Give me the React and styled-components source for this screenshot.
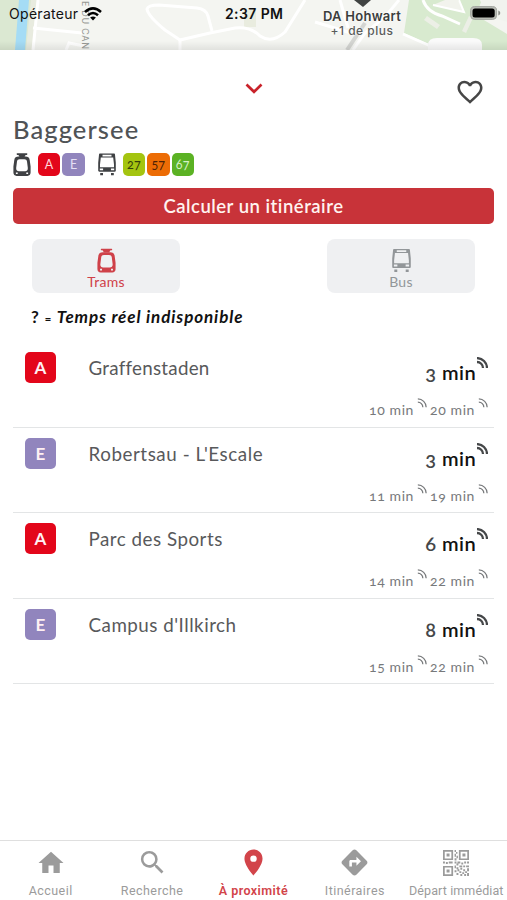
import { useState } from "react";
import styled, { createGlobalStyle } from "styled-components";
import { MdDirections, MdFavoriteBorder, MdHome, MdLocationOn, MdSearch } from "react-icons/md";

const GlobalStyle = createGlobalStyle`
  * {
    box-sizing: border-box;
  }
  body {
    margin: 0;
    background-color: white;
    font-family: Lato, "Open Sans", sans-serif;
    font-variant-numeric: oldstyle-nums;
  }
  button {
    border: none;
    padding: 0;
    background: none;
    font-family: inherit;
    cursor: pointer;
  }
  svg {
    display: block;
    flex-shrink: 0;
  }
`;

const RED = "#e3061a";
const PURPLE = "#9185bd";

const tramLines = [
  { name: "A", bg: RED, color: "#ffd9dc" },
  { name: "E", bg: PURPLE, color: "#e6e0f5" },
];

const busLines = [
  { name: "27", bg: "#a4c410", color: "#35400a" },
  { name: "57", bg: "#ec6c05", color: "#4c2206" },
  { name: "67", bg: "#5bb224", color: "#d5f0c5" },
];

const departures = [
  { line: "A", bg: RED, to: "Graffenstaden", spacing: 0.25, next: 3, later: [10, 20] },
  { line: "E", bg: PURPLE, to: "Robertsau - L'Escale", spacing: 0.56, next: 3, later: [11, 19] },
  { line: "A", bg: RED, to: "Parc des Sports", spacing: 0.5, next: 6, later: [14, 22] },
  { line: "E", bg: PURPLE, to: "Campus d'Illkirch", spacing: 0.5, next: 8, later: [15, 22] },
];

const TramIcon = ({ width = 18, height = 23 }) => (
  <svg width={width} height={height} viewBox="0 0 18 23" fill="currentColor">
    <path d="M4.200.3h9.600q.6 0 .6.800t-.6.800H4.200q-.6 0-.6-.800t.6-.800z" />
    <path d="M5.200 1.500h7.600L11.500 4h-5z" />
    <path
      fillRule="evenodd"
      d="M5.500 3.600h7c2.400 0 3.800 1.100 4.200 3.300l.9 6.700v6c0 2-1.200 3.300-3.200 3.300H3.600c-2 0-3.200-1.300-3.200-3.300v-6l.9-6.700c.4-2.200 1.800-3.300 4.200-3.300zM6.600 6.300c-1.600 0-2.300.7-2.600 2.200l-.8 6.200c-.3 2.200.8 3.500 2.700 3.500h6.200c1.900 0 3-1.300 2.700-3.500L14 8.500c-.3-1.500-1-2.200-2.600-2.200zM2.900 19.400v1.600h1.800v-1.600zm10.400 0v1.600h1.800v-1.600z"
    />
  </svg>
);

const BusIcon = ({ width = 18, height = 23 }) => (
  <svg width={width} height={height} viewBox="0 0 18 23" fill="currentColor">
    <path
      fillRule="evenodd"
      d="M2.200.5h13.600c.8 0 1.200.4 1.200 1.200l.8 8v7.800c0 .8-.4 1.200-1.200 1.200H1.400c-.8 0-1.200-.4-1.200-1.200V9.700l.8-8C1 .9 1.400.5 2.200.5zM4.500 1.700v1.700h9V1.700zM2.800 4.400L2 11.400v2.800h14v-2.800l-.8-7zM1.800 15.400v1.900h3.300v-1.900zm11.100 0v1.900h3.300v-1.900z"
    />
    <path d="M2.200 20h2.800v2.300H2.200zM13 20h2.800v2.300H13z" />
  </svg>
);

const WaveIcon = ({ size, stroke }) => (
  <svg width={size} height={size} viewBox="0 0 12 12" fill="none" stroke="currentColor" strokeWidth={stroke}>
    <path d="M1 1.100A10 10 0 0 1 11 11" />
    <path d="M1 5A6 6 0 0 1 7 11" />
  </svg>
);

const QrIcon = () => (
  <svg width="26" height="26" viewBox="0 0 27 27" fill="currentColor">
    <path
      fillRule="evenodd"
      d="M0 0h10.500v10.500H0zM1.800 1.800v6.900h6.900V1.800zM16.500 0H27v10.500H16.500zM18.300 1.800v6.900h6.900V1.800zM0 16.500h10.500V27H0zM1.800 18.300v6.900h6.900v-6.900z"
    />
    <path d="M3.700 3.700h3.100v3.100H3.700zM20.200 3.700h3.100v3.100h-3.100zM3.700 20.200h3.100v3.100H3.700z" />
    <path d="M12 0h1.500v2H12zM13.500 2H15v2h-1.500zM12 4h1.500v3H12zM14 6h1.500v2.500H14zM12 8.500h2V11h-2zM0 12h2v2H0zM3 12.500h2v2H3zM6 12h4v2H6zM12 12h2v2h-2zM15 12h3v2h-3zM14 14h2v2h-2zM19 13h2v2h-2zM22 12h2v2h-2zM25 12h2v2h-2zM12 16h1.500v3H12zM14 18h2v2h-2zM17 16h3v2h-3zM21 16h2v2h-2zM24 16h3v2h-3zM12 21h2v2h-2zM15 20h2v2h-2zM18 18.500h2v2h-2zM21 20h2v2h-2zM25 19h2v3h-2zM17 22h2v2h-2zM20 23h2v2h-2zM23 22h2v2h-2zM14 24h2v2h-2zM18 25h2v2h-2zM22 25h2v2h-2zM25 24h2v3h-2z" />
  </svg>
);

const MapPicture = () => (
  <MapSvg viewBox="0 0 507 50" width="507" height="50" fill="none">
    <rect width="507" height="50" fill="#f4f5f1" />
    <path d="M0 0h38l-5 50H0z" fill="#dbe8d2" />
    <path d="M19 0h10l-4 50H15z" fill="#a5dcf5" />
    <path d="M31 0h7l-5 50h-7z" fill="#e8ebdf" />
    <path d="M409 0h71l4 9-10 5 33 20v16h-65l-38-17z" fill="#d8eacf" />
    <path d="M482 0h25v22l-30-10z" fill="#f1f3ee" />
    <path d="M433 5l12-5h13l6 12z" fill="#f2f3ed" />
    <path d="M244 10h12v17h-12z" fill="#e9ecdf" />
    <g stroke="white" strokeWidth="3">
      <path d="M33 28l49 5M38 0L33 50M66 50l3-7 15 3" />
      <path d="M180 40l-15-10q-17-14-18-21 1-4 12-4l38 3q9 1 11 8l4 15" />
      <path d="M180 50V40l30-7 25-5q15-2 25 8 12 8 25-4l20-32" />
      <path d="M353 50l12-17 20-16 14-17M340 0l8 28M315 22l36 11M403 34l32 14" />
      <path d="M423 0q4 12 19 16l18 8" />
      <path d="M433 5l31 7-5-12" strokeWidth="2" />
    </g>
    <path d="M347 50l18-27" stroke="#d4d5d2" strokeWidth="4" />
    <path d="M427 16l13 9-3 4-13-9zM462 31l7-15 4 2-7 15z" fill="#ecefe6" />
    <path d="M354 0h17l-8 7z" fill="#404342" />
    <path d="M428 50v-5q0-7 9-7h36q9 0 9 7v5z" fill="#fafafa" />
  </MapSvg>
);

const App = () => {
  const [mode, setMode] = useState("trams");
  const [page, setPage] = useState("near");

  const clickTab = (id) => () => {
    setPage(id);
  };

  return (
    <Screen>
      <GlobalStyle />
      <MapHeader>
        <MapPicture />
        <Street>E DU CAN</Street>
        <StatusLeft>
          <span>Opérateur</span>
          <svg width="18" height="14" viewBox="0 0 18 14" fill="none" stroke="black" strokeWidth="2.500">
            <path d="M1 5Q9-2.300 17 5M4 8.300Q9 3.800 14 8.300" />
            <path d="M9 13.500L6.100 10.600Q9 8.200 11.900 10.600z" fill="black" stroke="none" />
          </svg>
        </StatusLeft>
        <Clock>2:37 PM</Clock>
        <Place>
          <PlaceName>DA Hohwart</PlaceName>
          <PlaceMore>+1 de plus</PlaceMore>
        </Place>
        <Battery width="31" height="14" viewBox="0 0 31 14">
          <rect x=".6" y=".6" width="26" height="12.800" rx="4" fill="#b9bcb5" stroke="#a2a59f" />
          <rect x="2.500" y="2.500" width="22.200" height="9" rx="2.500" fill="black" />
          <path d="M28.300 4.600q2 .8 2 2.400t-2 2.400z" fill="#8c8f89" />
        </Battery>
      </MapHeader>

      <Sheet>
        <SheetTop>
          <CloseButton>
            <svg width="18" height="11" viewBox="0 0 18 11" fill="none" stroke="#c9222a" strokeWidth="2.700">
              <path d="M1.500 1.500L9 8.800l7.500-7.300" />
            </svg>
          </CloseButton>
          <HeartButton>
            <MdFavoriteBorder size={30} />
          </HeartButton>
        </SheetTop>
        <Title>Baggersee</Title>
        <Lines>
          <TramIcon />
          <LineGroup>
            {tramLines.map((line) => (
              <LineBadge key={line.name} $bg={line.bg} $color={line.color}>{line.name}</LineBadge>
            ))}
          </LineGroup>
          <BusIcon />
          <LineGroup>
            {busLines.map((line) => (
              <LineBadge key={line.name} $bg={line.bg} $color={line.color}>{line.name}</LineBadge>
            ))}
          </LineGroup>
        </Lines>
        <RouteButton>Calculer un itinéraire</RouteButton>
        <Modes>
          <ModeButton $active={mode === "trams"} onClick={() => setMode("trams")}>
            <TramIcon width={19} height={25} />
            Trams
          </ModeButton>
          <ModeButton $active={mode === "bus"} onClick={() => setMode("bus")}>
            <BusIcon width={19} height={25} />
            Bus
          </ModeButton>
        </Modes>
        <Note>
          <span>?</span>
          <small>=</small>
          <em>Temps réel indisponible</em>
        </Note>

        {departures.map((item) => (
          <Row key={item.to}>
            <RowBadge $bg={item.bg}>{item.line}</RowBadge>
            <Destination $spacing={item.spacing}>{item.to}</Destination>
            <Times>
              <NextTime>
                <span>{item.next}</span>
                <b>min</b>
                <WaveIcon size={12} stroke={2.3} />
              </NextTime>
              <LaterTimes>
                {item.later.map((time) => (
                  <LaterTime key={time}>
                    {time} min
                    <WaveIcon size={10} stroke={1.5} />
                  </LaterTime>
                ))}
              </LaterTimes>
            </Times>
          </Row>
        ))}
      </Sheet>

      <BottomNav>
        <NavItem $active={page === "home"} onClick={clickTab("home")}>
          <NavIcon><MdHome size={30} /></NavIcon>
          Accueil
        </NavItem>
        <NavItem $active={page === "search"} onClick={clickTab("search")}>
          <NavIcon><MdSearch size={31} /></NavIcon>
          Recherche
        </NavItem>
        <NavItem $active={page === "near"} onClick={clickTab("near")}>
          <NavIcon><MdLocationOn size={31} /></NavIcon>
          À proximité
        </NavItem>
        <NavItem $active={page === "routes"} onClick={clickTab("routes")}>
          <NavIcon><MdDirections size={31} /></NavIcon>
          Itinéraires
        </NavItem>
        <NavItem $active={page === "now"} $tight onClick={clickTab("now")}>
          <NavIcon><QrIcon /></NavIcon>
          Départ immédiat
        </NavItem>
      </BottomNav>
    </Screen>
  );
};

export default App;

const Screen = styled.div`
  display: flex;
  flex-direction: column;
  width: 507px;
  height: 900px;
  overflow: hidden;
  background-color: white;
`;
const MapHeader = styled.header`
  position: relative;
  height: 50px;
  overflow: hidden;
  font-family: Inter, "Liberation Sans", sans-serif;
  font-variant-numeric: normal;
  color: #111;
  &::after {
    content: "";
    position: absolute;
    left: 0;
    right: 0;
    bottom: 0;
    height: 9px;
    background: linear-gradient(rgba(0, 0, 0, 0), rgba(0, 0, 0, 0.08));
  }
`;
const MapSvg = styled.svg`
  position: absolute;
  top: 0;
  left: 0;
`;
/* street name that runs down the map */
const Street = styled.span`
  position: absolute;
  top: 1px;
  left: 79px;
  writing-mode: vertical-rl;
  font-size: 9px;
  line-height: 12px;
  letter-spacing: 0.7px;
  white-space: nowrap;
  color: #969894;
`;
const StatusLeft = styled.div`
  position: absolute;
  top: 5px;
  left: 9px;
  display: flex;
  align-items: center;
  gap: 6px;
  font-size: 14px;
  line-height: 18px;
  letter-spacing: 0.3px;
`;
const Clock = styled.div`
  position: absolute;
  top: 5px;
  left: 225px;
  font-size: 14px;
  line-height: 18px;
  font-weight: 600;
  letter-spacing: 0.4px;
`;
const Place = styled.div`
  position: absolute;
  top: 9px;
  left: 312px;
  width: 100px;
  text-align: center;
  text-shadow: 0 0 2px white, 0 0 2px white;
`;
const PlaceName = styled.div`
  font-size: 13px;
  line-height: 15px;
  font-weight: 600;
  letter-spacing: 0.25px;
  color: #3b3d3c;
`;
const PlaceMore = styled.div`
  font-size: 12px;
  line-height: 13px;
  font-weight: 500;
  letter-spacing: 0.5px;
  color: #5a5c5a;
`;
const Battery = styled.svg`
  position: absolute;
  top: 6px;
  left: 470px;
`;
const Sheet = styled.main`
  flex: 1;
  display: flex;
  flex-direction: column;
  padding: 0 13px;
  background-color: white;
`;
const SheetTop = styled.div`
  display: grid;
  grid-template-columns: 1fr 18px 1fr;
  height: 60px;
`;
const CloseButton = styled.button`
  grid-column: 2;
  align-self: start;
  padding-top: 33px;
`;
const HeartButton = styled.button`
  justify-self: end;
  align-self: start;
  padding: 27px 9px 0 0;
  color: #464646;
`;
const Title = styled.h1`
  margin: 0;
  font-size: 25.500px;
  line-height: 39px;
  font-weight: 500;
  letter-spacing: 1.1px;
  color: #505356;
`;
const Lines = styled.div`
  display: flex;
  align-items: center;
  height: 31px;
  color: #3f4144;
`;
const LineGroup = styled.div`
  display: flex;
  gap: 2px;
  margin: 0 13px 0 7px;
`;
const LineBadge = styled.span`
  display: flex;
  justify-content: center;
  align-items: center;
  width: 22.400px;
  height: 22.400px;
  border-radius: 5px;
  font-size: 12.500px;
  letter-spacing: 0.2px;
  background-color: ${(props) => props.$bg};
  color: ${(props) => props.$color};
`;
const RouteButton = styled.button`
  height: 36px;
  margin-top: 8px;
  border-radius: 5px;
  font-size: 18.500px;
  font-weight: 600;
  letter-spacing: 0.5px;
  background-color: #c83339;
  color: #fff3f0;
`;
const Modes = styled.div`
  display: flex;
  justify-content: space-between;
  padding: 15px 19px 0;
`;
const ModeButton = styled.button`
  display: flex;
  flex-direction: column;
  align-items: center;
  width: 148px;
  height: 54px;
  padding-top: 9px;
  border-radius: 8px;
  font-size: 14px;
  line-height: 18px;
  letter-spacing: 0.3px;
  background-color: #eff0f2;
  color: ${(props) => (props.$active ? "#cf4149" : "#929699")};
`;
const Note = styled.p`
  display: flex;
  align-items: baseline;
  margin: 12px 0 11px 18px;
  font-size: 17px;
  line-height: 24px;
  font-weight: 700;
  color: #111;
  small {
    width: 12px;
    margin-left: 6px;
    font-size: 12px;
  }
  em {
    letter-spacing: 0.9px;
  }
`;
const Row = styled.div`
  display: grid;
  grid-template-columns: 31px 1fr auto;
  height: 85.500px;
  padding: 10px 6px 0 12px;
  border-bottom: 1.500px solid #e3e5e6;
`;
const RowBadge = styled.span`
  display: flex;
  justify-content: center;
  align-items: center;
  width: 31px;
  height: 31px;
  border-radius: 5px;
  font-size: 17px;
  font-weight: 700;
  background-color: ${(props) => props.$bg};
  color: #fff0f3;
`;
const Destination = styled.span`
  padding-left: 32.500px;
  font-size: 18.800px;
  line-height: 31px;
  letter-spacing: ${(props) => props.$spacing}px;
  font-variant-ligatures: common-ligatures;
  color: #58595b;
`;
const Times = styled.div`
  display: flex;
  flex-direction: column;
  align-items: flex-end;
`;
const NextTime = styled.div`
  display: flex;
  margin-top: 5px;
  font-size: 20px;
  line-height: 30px;
  font-weight: 600;
  color: #454749;
  b {
    margin-left: 6px;
    font-weight: 600;
    letter-spacing: 0.4px;
    color: #111;
  }
`;
const LaterTimes = styled.div`
  display: flex;
  gap: 3px;
  margin-top: 11px;
`;
const LaterTime = styled.div`
  display: flex;
  gap: 3px;
  font-size: 14px;
  line-height: 24px;
  letter-spacing: 0.6px;
  color: #77797b;
`;
const BottomNav = styled.nav`
  display: grid;
  grid-template-columns: repeat(5, 1fr);
  height: 60px;
  border-top: 1px solid #dfdfdf;
  background-color: white;
`;
const NavItem = styled.button`
  display: flex;
  flex-direction: column;
  align-items: center;
  padding-top: 6px;
  font-family: Roboto, "Noto Sans", sans-serif;
  font-size: 12.500px;
  line-height: 16px;
  font-weight: ${(props) => (props.$active ? 600 : 400)};
  letter-spacing: ${(props) => (props.$tight ? 0.1 : 0.45)}px;
  white-space: nowrap;
  color: ${(props) => (props.$active ? "#d2444a" : "#9b9b9b")};
`;
const NavIcon = styled.span`
  display: flex;
  justify-content: center;
  align-items: center;
  height: 31px;
  margin-bottom: 5px;
`;
